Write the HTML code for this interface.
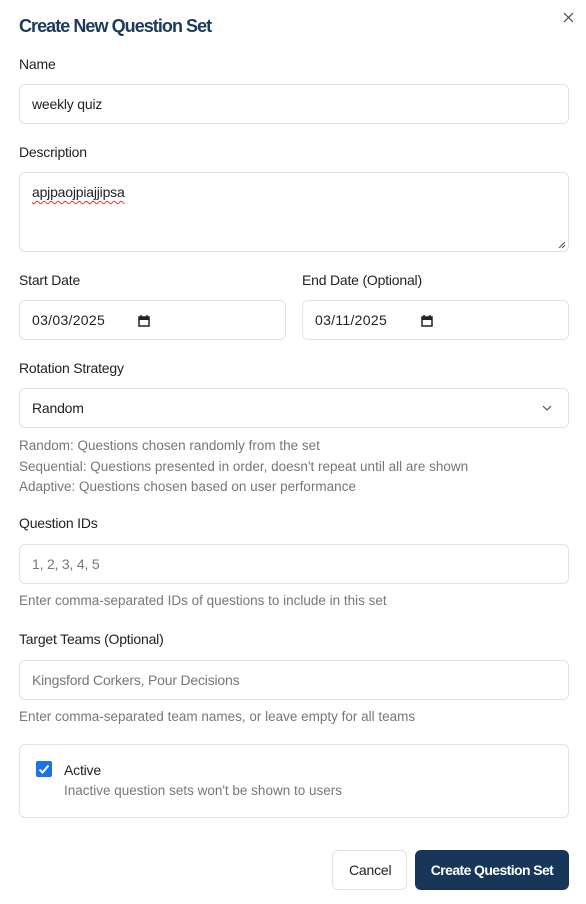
<!DOCTYPE html>
<html><head><meta charset="utf-8"><style>
*{box-sizing:border-box;margin:0;padding:0}
body{width:586px;height:904px;background:#fff;font-family:"Liberation Sans",sans-serif;position:relative;overflow:hidden;color:#1f1f1f}
.a{position:absolute;white-space:nowrap}
.t{left:19px;top:16px;font-size:18px;font-weight:bold;color:#1b3a5c;letter-spacing:-0.95px}
.l{font-size:14px;color:#222;letter-spacing:-0.2px}
.b{position:absolute;border:1px solid #e2e2e2;border-radius:6px;background:#fff}
.v{font-size:14px;color:#222;letter-spacing:-0.2px;position:absolute}
.h{font-size:13.5px;color:#777;letter-spacing:0px}
.p{color:#777}
</style></head><body>
<div class="a t">Create New Question Set</div>
<svg class="a" style="left:563px;top:12px" width="11" height="11" viewBox="0 0 11 11"><path d="M1 1L10 10M10 1L1 10" stroke="#444" stroke-width="1.2"/></svg>

<div class="a l" style="left:19px;top:56px">Name</div>
<div class="b" style="left:19px;top:84px;width:550px;height:40px"><span class="v" style="left:12px;top:11px">weekly quiz</span></div>

<div class="a l" style="left:19px;top:144px">Description</div>
<div class="b" style="left:19px;top:172px;width:550px;height:80px"><span class="v" style="left:12px;top:11px;text-decoration:underline wavy #e33;text-underline-offset:3px;text-decoration-thickness:1px">apjpaojpiajjipsa</span>
<svg style="position:absolute;right:2px;bottom:2px" width="8" height="8"><path d="M7 1L1 7M7 4L4 7" stroke="#555" stroke-width="1"/></svg></div>

<div class="a l" style="left:19px;top:272px">Start Date</div>
<div class="a l" style="left:302px;top:272px">End Date (Optional)</div>
<div class="b" style="left:19px;top:300px;width:267px;height:40px"><span class="v" style="left:12px;top:11px;letter-spacing:0.3px">03/03/2025</span>
<svg style="position:absolute;left:117px;top:13px" width="14" height="14"><rect x="2" y="3" width="10" height="9" fill="none" stroke="#222" stroke-width="1.5"/><rect x="2" y="3" width="10" height="3" fill="#222"/><path d="M4 1v3M10 1v3" stroke="#222" stroke-width="1.5"/></svg></div>
<div class="b" style="left:302px;top:300px;width:267px;height:40px"><span class="v" style="left:12px;top:11px;letter-spacing:0.3px">03/11/2025</span>
<svg style="position:absolute;left:117px;top:13px" width="14" height="14"><rect x="2" y="3" width="10" height="9" fill="none" stroke="#222" stroke-width="1.5"/><rect x="2" y="3" width="10" height="3" fill="#222"/><path d="M4 1v3M10 1v3" stroke="#222" stroke-width="1.5"/></svg></div>

<div class="a l" style="left:19px;top:360px">Rotation Strategy</div>
<div class="b" style="left:19px;top:388px;width:550px;height:40px"><span class="v" style="left:12px;top:11px">Random</span>
<svg style="position:absolute;left:522px;top:16px" width="10" height="7"><path d="M1 1l4 4 4-4" fill="none" stroke="#555" stroke-width="1.2"/></svg></div>
<div class="a h" style="left:19px;top:436px;line-height:20.5px">Random: Questions chosen randomly from the set<br>Sequential: Questions presented in order, doesn't repeat until all are shown<br>Adaptive: Questions chosen based on user performance</div>

<div class="a l" style="left:19px;top:515px">Question IDs</div>
<div class="b" style="left:19px;top:544px;width:550px;height:40px"><span class="v p" style="left:12px;top:11px">1, 2, 3, 4, 5</span></div>
<div class="a h" style="left:19px;top:593px">Enter comma-separated IDs of questions to include in this set</div>

<div class="a l" style="left:19px;top:631px">Target Teams (Optional)</div>
<div class="b" style="left:19px;top:660px;width:550px;height:40px"><span class="v p" style="left:12px;top:11px">Kingsford Corkers, Pour Decisions</span></div>
<div class="a h" style="left:19px;top:709px">Enter comma-separated team names, or leave empty for all teams</div>

<div class="b" style="left:19px;top:744px;width:550px;height:74px">
<div style="position:absolute;left:16px;top:16px;width:16px;height:16px;background:#1a73e8;border-radius:2px"><svg width="16" height="16"><path d="M3.5 8.5l3 3 6-7" fill="none" stroke="#fff" stroke-width="2"/></svg></div>
<span class="v" style="left:44px;top:17px">Active</span>
<span class="v h" style="left:44px;top:38px">Inactive question sets won't be shown to users</span></div>

<div class="b" style="left:332px;top:850px;width:75px;height:40px;border-radius:6px"><span class="v" style="left:16px;top:11px">Cancel</span></div>
<div class="a" style="left:415px;top:850px;width:154px;height:40px;background:#17365a;border-radius:6px;color:#fff;font-size:14px;font-weight:bold;text-align:center;line-height:40px;letter-spacing:-0.6px">Create Question Set</div>
</body></html>
